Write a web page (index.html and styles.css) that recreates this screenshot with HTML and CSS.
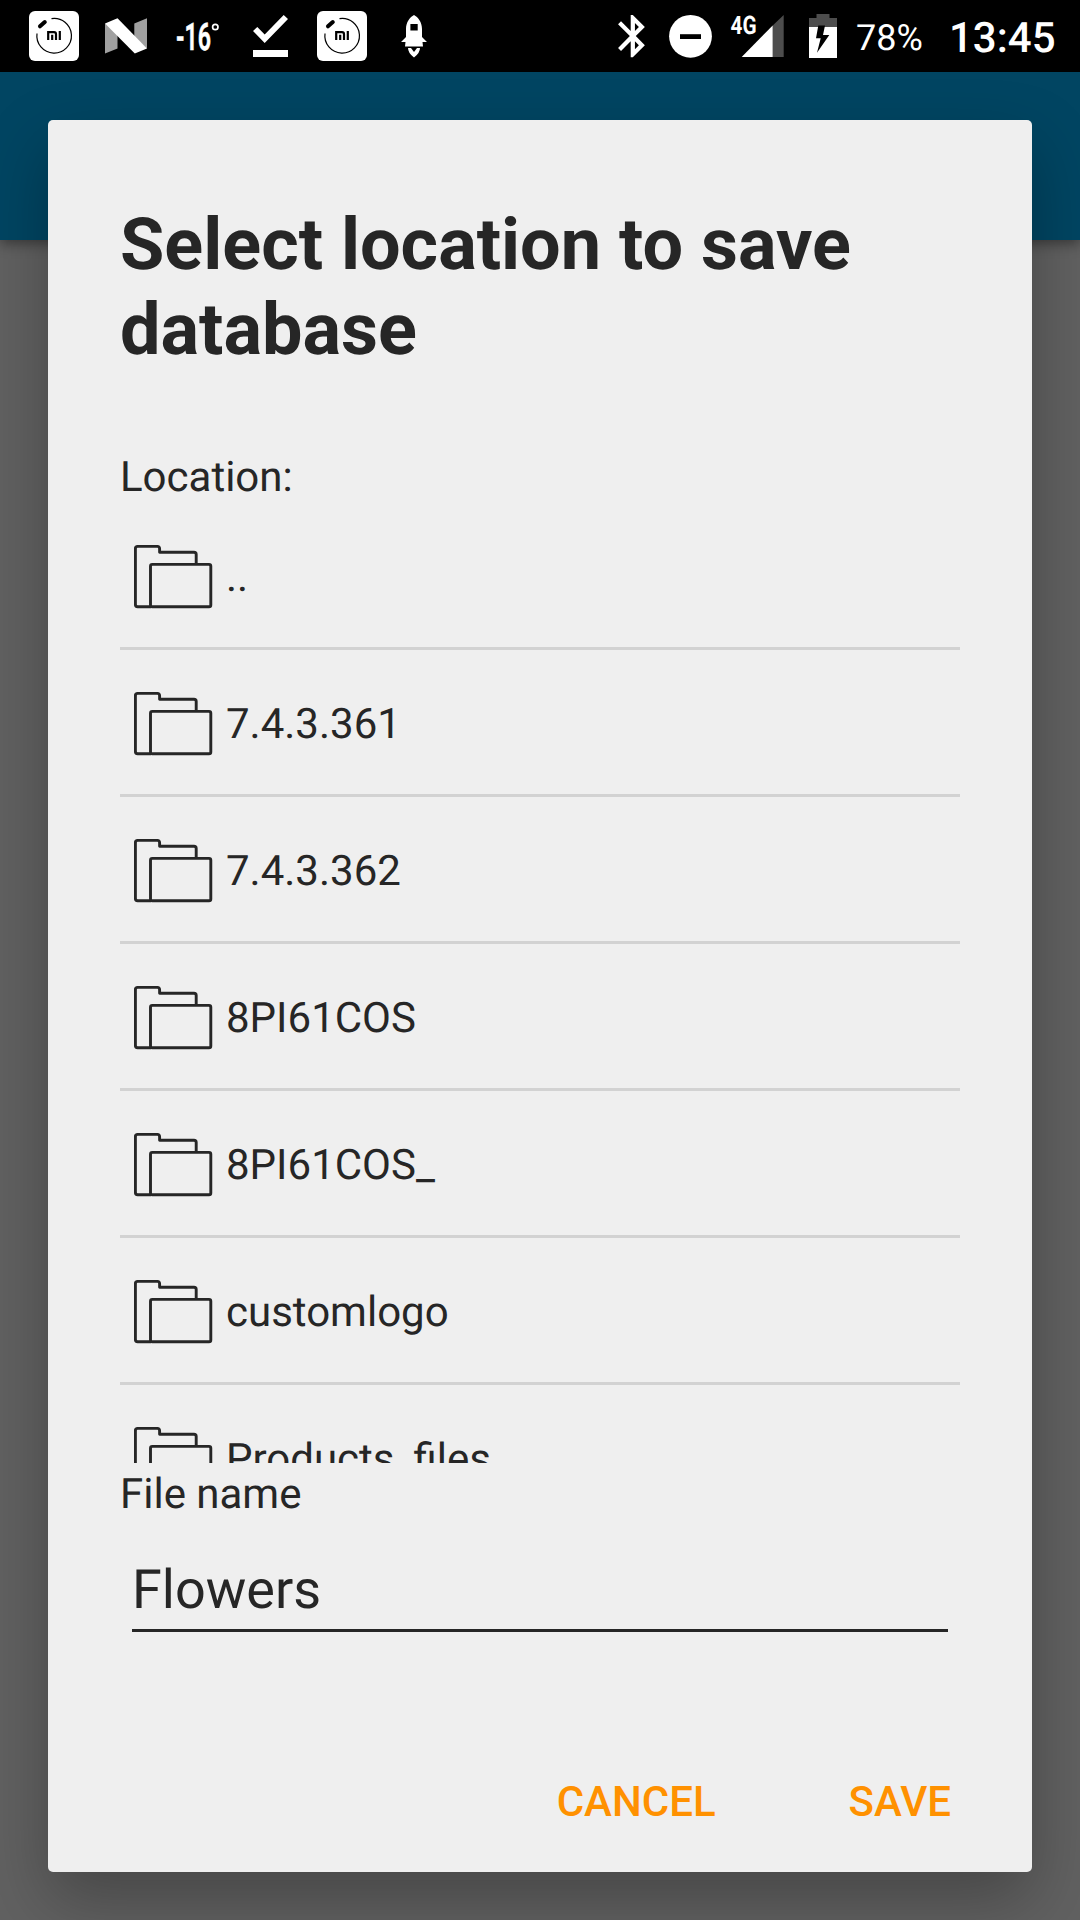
FILE: index.html
```
<!DOCTYPE html>
<html lang="en">
<head>
<meta charset="utf-8">
<title>Select location to save database</title>
<link rel="stylesheet" href="styles.css">
</head>
<body>
<svg class="defs" width="0" height="0" aria-hidden="true">
  <symbol id="folder" viewBox="0 0 80 66">
    <g fill="none" stroke="#262626" stroke-width="2.9" stroke-linejoin="round">
      <path d="M62.200 19.500V10.500q0-2.200-2.200-2.200H25.600V4.600q0-2.200-2.200-2.200H3.600q-2.200 0-2.200 2.200V60.500q0 2.200 2.200 2.200H17"/>
      <rect x="16.500" y="20.400" width="60.300" height="42.300" rx="1.800"/>
    </g>
  </symbol>
  <symbol id="mi" viewBox="0 0 72 72">
    <rect x="11" y="11" width="50" height="50" rx="6" fill="#fff"/>
    <path d="M33.500 18.700A17.300 17.300 0 1 1 19 33.500" fill="none" stroke="#000" stroke-width="1.200"/>
    <path d="M22 26.300L26.800 22" stroke="#000" stroke-width="4" stroke-linecap="round"/>
    <path d="M30.200 40V32.200H36q2 0 2 2V40M34.200 34.800V40M41.800 31V40" fill="none" stroke="#000" stroke-width="2.200"/>
  </symbol>
</svg>
<div class="screen">
  <header class="status">
    <div class="notifications">
      <svg class="slot"><use href="#mi"/></svg>
      <svg class="slot" viewBox="0 0 72 72">
        <path d="M15 23.500L27.500 31V48.500L15 53.500zM44.300 23.500L57 18.300V48.500L44.300 38z" fill="#a0a0a0"/>
        <path d="M15 23.500L27.500 18.300L57 48.500L44.800 53.500z" fill="#fff"/>
      </svg>
      <svg class="slot temp" viewBox="0 0 72 72">
        <text x="14" y="50" font-size="38" textLength="35" lengthAdjust="spacingAndGlyphs">-16</text>
        <circle cx="53.300" cy="27" r="2.700" fill="none" stroke="#fff" stroke-width="1.700"/>
      </svg>
      <svg class="slot" viewBox="0 0 72 72" fill="#fff">
        <path d="M19 31L23.300 27L30.700 34.500L49.700 15L54 19L30.700 43zM19 50H54V57H19z"/>
      </svg>
      <svg class="slot"><use href="#mi"/></svg>
      <svg class="slot" viewBox="0 0 72 72">
        <path d="M36 15C40 17 44 22 44 29V37L49 42H44.500L45 46.500H27L27.500 42H23L28 37V29C28 22 32 17 36 15zM30 48H33L36 52L39 48H42Q42 53 36 57.500Q30 53 30 48z" fill="#fff"/>
        <path d="M32.400 24H39.700V30.500H32.400z" fill="#000"/>
      </svg>
    </div>
    <div class="system">
      <svg class="bluetooth" viewBox="600 0 60 72">
        <path transform="translate(607.500 10.800) scale(2.110)" fill="#fff" d="M17.710 7.710L12 2h-1v7.590L6.410 5 5 6.410 10.590 12 5 17.590 6.410 19 11 14.410V22h1l5.710-5.710-4.300-4.290 4.300-4.290zM13 5.830l1.880 1.880L13 9.590V5.830zm1.880 10.460L13 18.170v-3.760l1.880 1.880z"/>
      </svg>
      <svg class="dnd" viewBox="660 0 60 72">
        <circle cx="690.500" cy="36.300" r="21.400" fill="#fff"/><path d="M680 34.200H701V39H680z"/>
      </svg>
      <svg class="signal" viewBox="720 0 80 72">
        <path d="M772.700 25.500L783.700 15V57H772.700z" fill="#4d4d4d"/>
        <path d="M741.700 57L772.700 25.500V57z" fill="#fff"/>
        <text x="730.500" y="33.500" font-size="25.500" textLength="26" lengthAdjust="spacingAndGlyphs">4G</text>
      </svg>
      <svg class="battery" viewBox="800 0 50 72">
        <path d="M809 27V18H816.500V14H829.500V18H837V27z" fill="#4d4d4d"/>
        <path d="M809 27H837V58H809z" fill="#fff"/>
        <path d="M818.300 25.500H825L823 35H829.300L817 52.700L820.700 38.300H816z"/>
      </svg>
      <span class="percent">78%</span>
      <span class="clock">13:45</span>
    </div>
  </header>
  <div class="toolbar"></div>
  <main class="dialog">
    <h1>Select location to save database</h1>
    <p class="label location">Location:</p>
    <ul class="folders">
      <li><svg><use href="#folder"/></svg><span>..</span></li>
      <li><svg><use href="#folder"/></svg><span>7.4.3.361</span></li>
      <li><svg><use href="#folder"/></svg><span>7.4.3.362</span></li>
      <li><svg><use href="#folder"/></svg><span>8PI61COS</span></li>
      <li><svg><use href="#folder"/></svg><span>8PI61COS_</span></li>
      <li><svg><use href="#folder"/></svg><span>customlogo</span></li>
      <li><svg><use href="#folder"/></svg><span>Products_files</span></li>
    </ul>
    <p class="label filename">File name</p>
    <div class="field">Flowers</div>
    <div class="actions"><button>CANCEL</button><button>SAVE</button></div>
  </main>
</div>
</body>
</html>
```
FILE: styles.css
```
* { box-sizing: border-box; }
body { margin: 0; font-family: Roboto, sans-serif; color: #262626; text-rendering: geometricPrecision; }
h1, p, ul { margin: 0; padding: 0; }
svg { display: block; flex: none; }
.defs { position: absolute; }
.screen { position: relative; width: 1080px; height: 1920px; overflow: hidden; background: #616161; }

.status { position: relative; z-index: 2; display: flex; justify-content: space-between; height: 72px; background: #000; color: #fff; }
.status text { fill: #fff; font-weight: 500; }
.status .temp text { font-weight: 600; stroke: #fff; stroke-width: .6; }
.notifications { display: flex; padding-left: 18px; }
.slot { width: 72px; height: 72px; }
.system { display: flex; width: 480px; line-height: 72px; }
.system svg { height: 72px; }
.bluetooth, .dnd { width: 60px; }
.signal { width: 80px; }
.signal text { font-weight: 700; }
.battery { width: 50px; }
.percent { width: 94px; padding: 2px 0 0 6px; font-size: 36px; }
.clock { padding: 3px 0 0 5px; font-size: 42px; line-height: 69px; height: 72px; font-weight: 500; }
.clock { padding-top: 4px; }

.toolbar { height: 168px; background: #014562; box-shadow: 0 4px 12px rgba(0, 0, 0, .4); }

.dialog {
  position: absolute; left: 48px; top: 120px; width: 984px; height: 1752px;
  display: flex; flex-direction: column; padding: 82px 72px 0;
  background: #efefef; border-radius: 5px;
  box-shadow: 0 28px 66px rgba(0, 0, 0, .28);
}
h1 { font-size: 72px; line-height: 85px; font-weight: 700; }
.label { font-size: 42px; line-height: 50px; }
.location { margin-top: 81px; }
.folders { height: 960px; overflow: hidden; list-style: none; }
.folders li { display: flex; align-items: center; height: 147px; padding: 4px 0 0 14px; border-bottom: 3px solid #d2d2d2; font-size: 42px; }
.folders svg { width: 80px; height: 66px; margin-right: 12px; }
.filename { margin-top: 7px; }
.field { margin: 11px 12px 0; height: 101px; padding-top: 28px; border-bottom: 3px solid #262626; font-size: 54px; line-height: 64px; }
.actions { display: flex; justify-content: flex-end; gap: 133px; margin-top: 145px; padding-right: 9px; }
button { padding: 0; border: 0; background: none; font: 500 42px/50px Roboto, sans-serif; color: #ff9100; }
```
